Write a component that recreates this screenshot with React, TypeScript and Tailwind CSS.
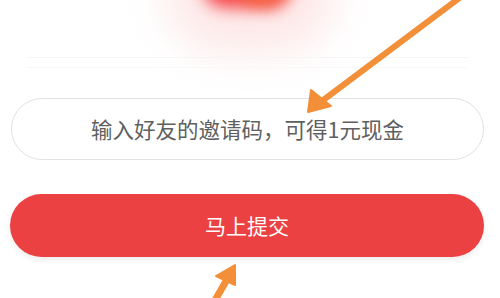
import React from "react";

const cjk = { fontFamily: '"Noto Sans CJK SC", "Noto Sans", sans-serif' };

function Arrows() {
  return (
    <svg className="pointer-events-none absolute inset-0" width="500" height="298" viewBox="0 0 500 298">
      <g fill="#f28f38" stroke="#f28f38" strokeLinecap="round" strokeLinejoin="round">
        <line x1="462" y1="-4" x2="322" y2="101" strokeWidth="6" />
        <polygon points="308,112 311,90 331,106" strokeWidth="2" />
        <line x1="214" y1="302" x2="229" y2="276" strokeWidth="7" />
        <polygon points="235,265 216,276 235,285" strokeWidth="2" />
      </g>
    </svg>
  );
}

export default function App() {
  return (
    <div className="relative h-[298px] w-[500px] overflow-hidden bg-white" style={cjk}>
      <div className="absolute left-[165px] top-[-72px] h-[125px] w-[170px] rounded-full bg-[#fde8e8] blur-[20px]" />
      <div className="absolute left-[202px] top-[-44px] h-[52px] w-[90px] rounded-[24px] bg-[#f6474b] blur-[8px]" />
      <div className="absolute left-[240px] top-[-28px] h-[32px] w-[44px] rounded-full bg-[#f56a3c] blur-[8px]" />

      <div className="relative flex flex-col pl-[11px] pr-[16px]">
        <div className="h-[57px]" />
        <div className="mx-[16px] h-px bg-[#f5f5f5]" />
        <div className="h-[9px]" />
        <div className="mx-[16px] h-px bg-[#f8f8f8]" />
        <div className="h-[30px]" />
        <div className="flex h-[62px] items-center justify-center rounded-full border border-[#e2e2e2] bg-white">
          <span className="text-[21.5px] leading-none text-[#5f5f5f]">输入好友的邀请码，可得1元现金</span>
        </div>
        <div className="h-[34px]" />
        <button className="-ml-px flex h-[63px] items-center justify-center rounded-full bg-[#ec4143] shadow-[0_3px_6px_rgba(0,0,0,0.08)]">
          <span className="text-[21px] leading-none text-white">马上提交</span>
        </button>
      </div>

      <Arrows />
    </div>
  );
}
